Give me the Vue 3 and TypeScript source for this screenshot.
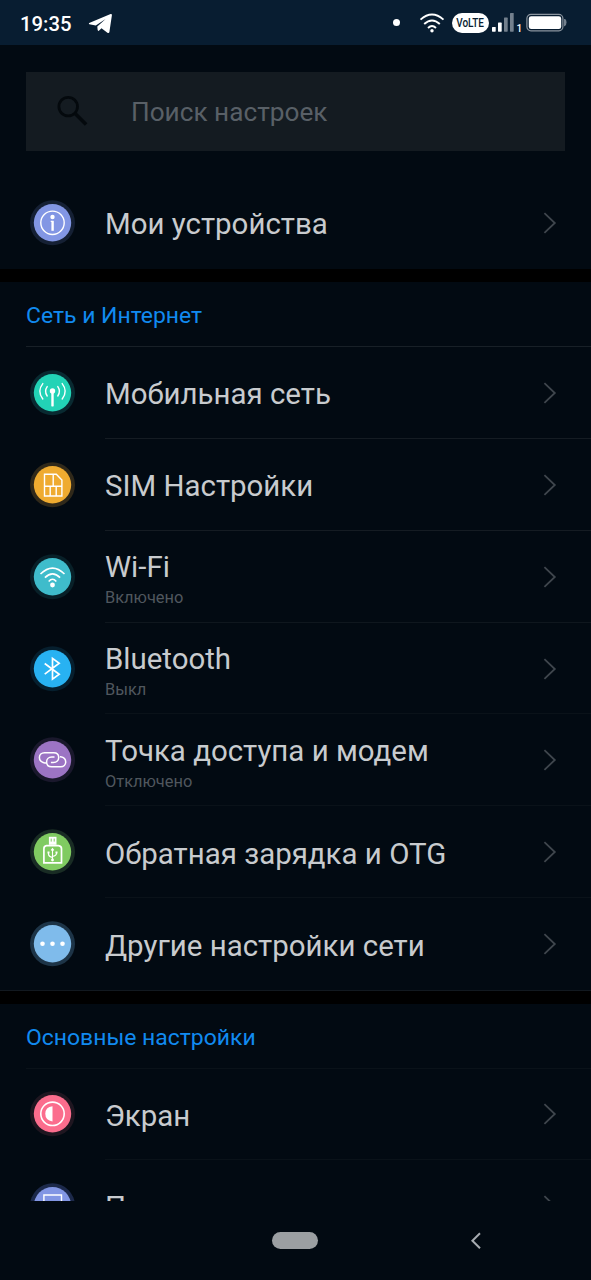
<script setup lang="ts">
type IconName = 'info' | 'cell' | 'sim' | 'wifi' | 'bluetooth' | 'hotspot' | 'otg' | 'more' | 'display' | 'panel'

interface Item {
  title: string
  icon: IconName
  color: string
  halo: string
  note?: string
}

interface Section {
  heading?: string
  items: Item[]
}

const sections: Section[] = [
  {
    items: [{ title: 'Мои устройства', icon: 'info', color: '#8296e4', halo: '#152034' }],
  },
  {
    heading: 'Сеть и Интернет',
    items: [
      { title: 'Мобильная сеть', icon: 'cell', color: '#22d3b6', halo: '#092a31' },
      { title: 'SIM Настройки', icon: 'sim', color: '#efab30', halo: '#30291a' },
      { title: 'Wi-Fi', icon: 'wifi', color: '#3fbccb', halo: '#082028', note: 'Включено' },
      { title: 'Bluetooth', icon: 'bluetooth', color: '#28b2f2', halo: '#061f2e', note: 'Выкл' },
      { title: 'Точка доступа и модем', icon: 'hotspot', color: '#9c74c4', halo: '#1a182c', note: 'Отключено' },
      { title: 'Обратная зарядка и OTG', icon: 'otg', color: '#80cb61', halo: '#192c24' },
      { title: 'Другие настройки сети', icon: 'more', color: '#7fbbeb', halo: '#1d3447' },
    ],
  },
  {
    heading: 'Основные настройки',
    items: [
      { title: 'Экран', icon: 'display', color: '#fb6d8d', halo: '#1f1620' },
      { title: 'П', icon: 'panel', color: '#8296e4', halo: '#1c294a' },
    ],
  },
]
</script>

<template>
  <div class="phone">
    <header class="status">
      <span class="clock">19:35</span>
      <svg class="plane" width="26" height="22" viewBox="0 0 26 22">
        <path d="M1.2 10.1 22.6 1.1Q24 .7 23.9 2.2L21.4 19Q21 20.8 19.4 19.7L13.5 15.3 10.9 17.8Q9.9 18.4 9.6 16.8L9.3 13.6 17.6 5.9 7.8 12.4 1.3 11.2Q.3 10.7 1.2 10.1Z" fill="#fff" />
      </svg>
      <span class="spacer"></span>
      <span class="dot"></span>
      <svg class="wifi" width="26" height="22" viewBox="0 0 26 22" fill="none" stroke="#fff" stroke-width="1.9">
        <path d="M1.5 7.6Q13-2.4 24.5 7.6M5.2 12Q13 5 20.8 12M9 16Q13 12.2 17 16" />
        <circle cx="13" cy="18.8" r="1.7" fill="#fff" stroke="none" />
      </svg>
      <span class="volte"><span>VoLTE</span></span>
      <svg class="signal" width="32" height="22" viewBox="0 0 32 22">
        <rect x="1" y="15" width="3.7" height="4.7" rx=".6" fill="#fff" />
        <rect x="7" y="10.6" width="3.7" height="9.1" rx=".6" fill="#fff" />
        <rect x="13" y="5.6" width="3.7" height="14.1" rx=".6" fill="#73808d" />
        <rect x="19" y="1" width="3.7" height="18.7" rx=".6" fill="#73808d" />
        <text x="25.4" y="20" class="slot">1</text>
      </svg>
      <svg class="battery" width="42" height="20" viewBox="0 0 42 20">
        <rect x=".9" y="1.4" width="36" height="16.4" rx="4" fill="none" stroke="#8a949e" stroke-width="1.2" />
        <rect x="2.8" y="3.3" width="32.4" height="12.8" rx="2.4" fill="#fff" />
        <path d="M38 6h.6q1.9.4 1.9 3.6t-1.9 3.6H38Z" fill="#73808d" />
      </svg>
    </header>

    <main class="content">
      <div class="search">
        <svg width="32" height="32" viewBox="0 0 32 32" fill="none" stroke="#04090d">
          <circle cx="11.2" cy="11.6" r="9.3" stroke-width="2.8" />
          <path d="m17.6 18 11.5 11.5" stroke-width="3.6" />
        </svg>
        <span>Поиск настроек</span>
      </div>

      <section v-for="(section, s) in sections" :key="s" class="section">
        <h2 v-if="section.heading">{{ section.heading }}</h2>
        <div v-for="item in section.items" :key="item.title" class="row">
          <svg class="icon" width="46" height="46" viewBox="0.5 0.2 46 46" fill="none" stroke="#fff" stroke-width="1.4">
            <circle cx="23" cy="23" r="22.5" :fill="item.halo" stroke="none" />
            <circle cx="23" cy="23" r="18.7" :fill="item.color" stroke="none" />
            <g v-if="item.icon === 'info'">
              <circle cx="23" cy="23" r="11.7" />
              <circle cx="23" cy="17.2" r="2.2" fill="#fff" stroke="none" />
              <path d="M23.1 21V31" stroke-width="2.4" />
              <path d="M21.2 21.6H23" stroke-width="1.2" />
            </g>
            <g v-else-if="item.icon === 'cell'" stroke-linecap="round">
              <circle cx="23" cy="21.2" r="2.7" fill="#fff" stroke="none" />
              <path d="M23 22V35.6" stroke-width="2.4" />
              <path d="M17.7 16.8Q14.4 21.5 17.7 26.2M28.3 16.8Q31.6 21.5 28.3 26.2M13.3 13.8Q7.3 21.5 13.3 29.2M32.7 13.8Q38.7 21.5 32.7 29.2" />
            </g>
            <g v-else-if="item.icon === 'sim'">
              <path d="M15 12.4H26.8L32.4 18.2V34.2H15ZM15 24.4H32.4M23.7 12.4V24.4M20.7 24.4V34.2M26.7 24.4V34.2" />
            </g>
            <g v-else-if="item.icon === 'wifi'">
              <path d="M11 20.2Q23 8.4 35 20.2M15.4 23.8Q23 16.2 30.6 23.8M19.2 27.6Q23 23.2 26.8 27.6" stroke-width="1.6" />
              <circle cx="23" cy="31.2" r="2.4" fill="#fff" stroke="none" />
            </g>
            <g v-else-if="item.icon === 'bluetooth'">
              <path d="M15.2 17.7 29.7 28.5 23 33.4V12.6L29.7 17.5 15.2 28.3" stroke-width="1.7" />
            </g>
            <g v-else-if="item.icon === 'hotspot'" stroke-width="1.5">
              <path d="M17 26.1H15.2C11.6 25.6 9.9 23.4 9.9 20.8C9.9 18 12 15.9 15 15.9H24.2C27.3 15.9 29.2 18 29.2 20.7C29.2 23.2 27.2 25.6 24 25.6H21.4" />
              <path d="M30.4 19.9H31.2C34.6 20.4 36.2 22.5 36.2 25.1C36.2 28 34.1 30 31.2 30H22.2C19.1 30 17.1 28 17.1 25.2C17.1 22.4 19.1 20.3 22.2 20.3H25" />
            </g>
            <g v-else-if="item.icon === 'otg'">
              <path d="M19.4 8H27V16H19.4Z" fill="#fff" stroke="none" />
              <path d="M21.7 9.8V12.8M24.7 9.8V12.8" stroke="#80cb61" stroke-width="1" />
              <path d="M17 16.9H29Q32 17.2 32 20V34H14.4V20Q14.4 17.2 17 16.9Z" stroke-width="1.7" />
              <path d="M23 20V31.5M19 23.8V25.6Q19.2 27.8 23 28.7M27 23.8V25Q26.8 27 23 27.7M21.7 21.5 23 19.8 24.3 21.5" stroke-width="1.1" />
              <path d="M18 22.8H20V24.8H18ZM26 22.8H28V24.8H26Z" fill="#fff" stroke="none" />
              <circle cx="23" cy="31.2" r="1.4" fill="#fff" stroke="none" />
            </g>
            <g v-else-if="item.icon === 'more'" fill="#fff" stroke="none">
              <circle cx="13" cy="23" r="2.3" />
              <circle cx="23" cy="23" r="2.3" />
              <circle cx="33" cy="23" r="2.3" />
            </g>
            <g v-else-if="item.icon === 'display'">
              <circle cx="23" cy="23" r="11.7" stroke-width="1.6" />
              <path d="M23 15.4V30.6Q15.8 29.8 15.8 23T23 15.4Z" fill="#fff" stroke="none" />
            </g>
            <g v-else>
              <path d="M14.4 12.2H32V32H14.4Z" />
            </g>
          </svg>
          <div class="body">
            <div class="labels">
              <span class="title">{{ item.title }}</span>
              <span v-if="item.note" class="note">{{ item.note }}</span>
            </div>
            <svg class="chevron" width="14" height="22" viewBox="0 0 14 22" fill="none" stroke="#3f464d" stroke-width="1.8">
              <path d="m1.4 1.2 10.4 9.8L1.4 20.8" />
            </svg>
          </div>
        </div>
      </section>
    </main>

    <nav class="nav">
      <span class="home"></span>
      <svg class="back" width="12" height="18" viewBox="0 0 12 18" fill="none" stroke="#a6abb0" stroke-width="2">
        <path d="M10 1.2 2.4 8.7l7.6 7.5" />
      </svg>
    </nav>
  </div>
</template>

<style>
body {
  margin: 0;
  background: #020a12;
}
</style>

<style scoped>
.phone {
  width: 591px;
  height: 1280px;
  display: flex;
  flex-direction: column;
  overflow: hidden;
  background: #020a12;
  font-family: Roboto, "Noto Sans", sans-serif;
  color: #c8cbce;
}
.status {
  flex: none;
  height: 45px;
  box-sizing: border-box;
  padding: 0 23px 0 20px;
  display: flex;
  align-items: center;
  background: #081d31;
}
.clock {
  font-size: 20.3px;
  font-weight: 500;
  color: #fff;
  line-height: 44px;
  padding-top: 2px;
}
.plane { margin: 2px 0 0 17px; }
.spacer { flex: 1; }
.dot {
  width: 7px;
  height: 7px;
  border-radius: 50%;
  background: #fff;
  margin-right: 19px;
}
.wifi { margin-right: 7px; }
.volte {
  width: 37px;
  height: 20px;
  border-radius: 10px;
  background: #fff;
  color: #081d31;
  display: flex;
  align-items: center;
  justify-content: center;
  font-size: 13px;
  font-weight: 500;
  margin-right: 2px;
}
.volte span { transform: scaleX(0.77); }
.slot {
  font: 500 10px Roboto, sans-serif;
  fill: #fff;
}
.signal { margin-right: 3px; }
.battery { margin-top: 1px; }
.content {
  height: 1156px;
  overflow: hidden;
}
.search {
  margin: 27px 26px 26.5px;
  height: 78.5px;
  background: #141b21;
  display: flex;
  align-items: center;
  font-size: 26.2px;
  color: #596067;
}
.search svg { margin: 0 42px 0 31px; }
.search span { padding-top: 2px; }
.section + .section { border-top: 13px solid #000; }
.section:nth-of-type(2) {
  height: 708px;
  border-bottom: 1px solid #121920;
}
h2 {
  margin: 0 0 0 26px;
  height: 64px;
  line-height: 67px;
  border-bottom: 1px solid #182027;
  font-size: 22.95px;
  font-weight: 400;
  color: #118af0;
}
.section:last-child h2 { border-bottom-color: #0a1219; }
.row {
  height: 91.9px;
  padding-left: 29.8px;
  display: flex;
  align-items: center;
}
.section:last-child .row { height: 91.2px; }
.icon { flex: none; }
.body {
  flex: 1;
  height: 100%;
  box-sizing: border-box;
  margin-left: 29.2px;
  padding-right: 34px;
  display: flex;
  align-items: center;
  justify-content: space-between;
  border-bottom: 1px solid #0a1219;
}
.row:nth-of-type(-n + 2) .body { border-bottom-color: #151c23; }
.row:nth-of-type(3) .body { border-bottom-color: #0f171e; }
.section:last-child .row .body { border-bottom-color: #0a1219; }
.section:not(:last-child) .row:last-child .body { border-bottom-color: transparent; }
.labels {
  display: flex;
  flex-direction: column;
}
.title {
  font-size: 29.45px;
  line-height: 35px;
  white-space: nowrap;
  padding-top: 5px;
}
.note {
  font-size: 16.4px;
  line-height: 20px;
  color: #50575e;
  margin: 3px 0 -1px;
}
.chevron { margin-top: 1px; }
.nav {
  flex: none;
  height: 79px;
  display: flex;
  align-items: center;
}
.home {
  width: 46px;
  height: 17px;
  border-radius: 9px;
  background: #9b9fa2;
  margin: 0 152px 0 272px;
}
</style>
